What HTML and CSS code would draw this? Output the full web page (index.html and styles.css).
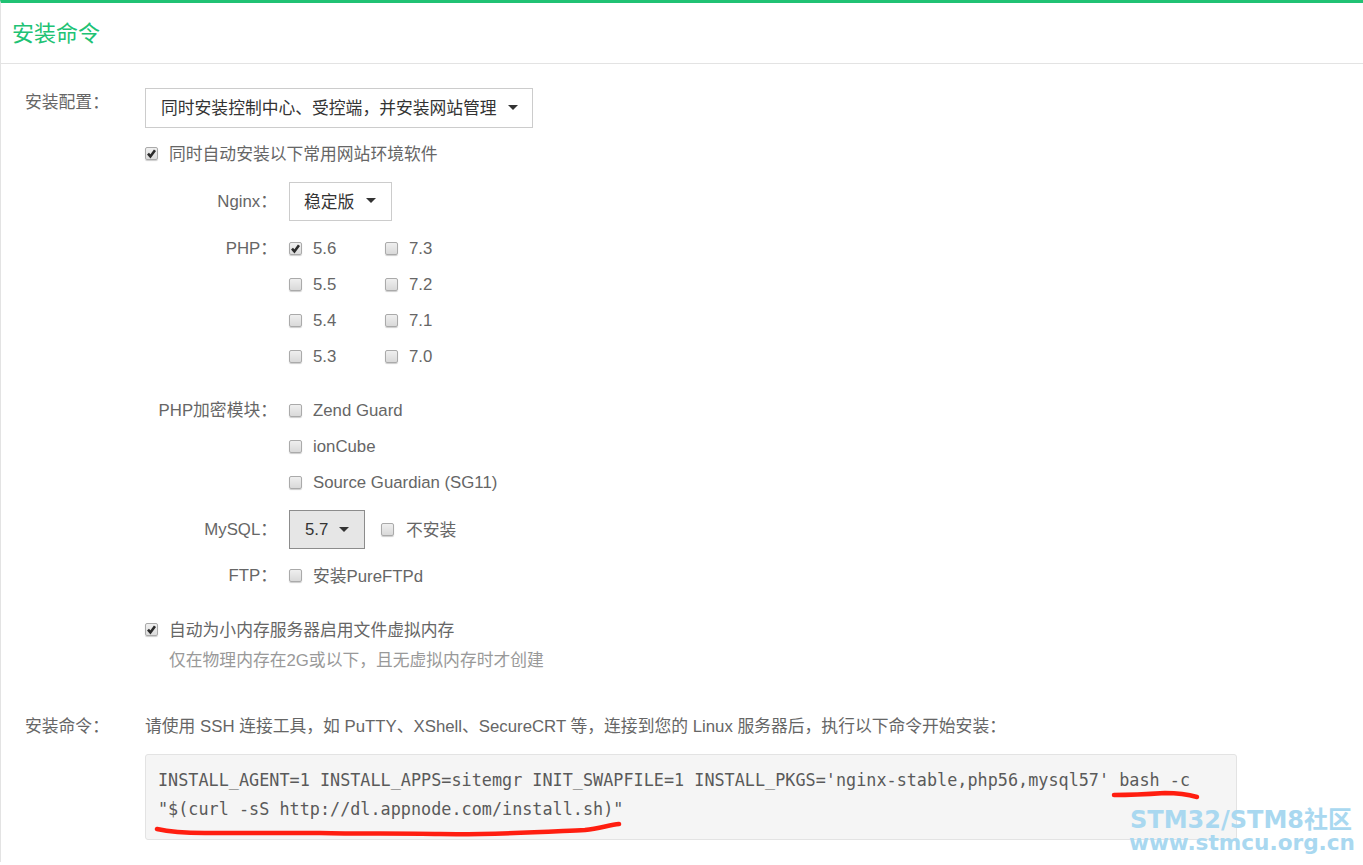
FILE: index.html
```html
<!DOCTYPE html>
<html lang="zh-CN">
<head>
<meta charset="utf-8">
<title>安装命令</title>
<link rel="stylesheet" href="styles.css">
</head>
<body>
<main class="panel">
  <h1 class="panel-title">安装命令</h1>
  <section class="form">
    <div class="row row-config">
      <div class="row-label">安装配置&#xFF1A;</div>
      <div class="row-body">
        <button class="dropdown dropdown-wide" type="button">同时安装控制中心、受控端&#xFF0C;并安装网站管理<i class="caret"></i></button>
        <label class="check check-auto"><span class="box on"><svg viewBox="0 0 12 12"><path d="M2.2 6.2 4.8 9.2 9.8 2.4" /></svg></span>同时自动安装以下常用网站环境软件</label>
        <div class="sub sub-nginx">
          <div class="sub-label">Nginx&#xFF1A;</div>
          <button class="dropdown dropdown-nginx" type="button">稳定版<i class="caret"></i></button>
        </div>
        <div class="sub sub-php">
          <div class="sub-label sub-label-check">PHP&#xFF1A;</div>
          <div class="php-grid">
            <label class="check"><span class="box on"><svg viewBox="0 0 12 12"><path d="M2.2 6.2 4.8 9.2 9.8 2.4" /></svg></span>5.6</label>
            <label class="check"><span class="box"></span>7.3</label>
            <label class="check"><span class="box"></span>5.5</label>
            <label class="check"><span class="box"></span>7.2</label>
            <label class="check"><span class="box"></span>5.4</label>
            <label class="check"><span class="box"></span>7.1</label>
            <label class="check"><span class="box"></span>5.3</label>
            <label class="check"><span class="box"></span>7.0</label>
          </div>
        </div>
        <div class="sub sub-enc">
          <div class="sub-label sub-label-check">PHP加密模块&#xFF1A;</div>
          <div class="stack">
            <label class="check"><span class="box"></span>Zend Guard</label>
            <label class="check"><span class="box"></span>ionCube</label>
            <label class="check"><span class="box"></span>Source Guardian (SG11)</label>
          </div>
        </div>
        <div class="sub sub-mysql">
          <div class="sub-label">MySQL&#xFF1A;</div>
          <button class="dropdown dropdown-mysql" type="button">5.7<i class="caret"></i></button>
          <label class="check check-none"><span class="box"></span>不安装</label>
        </div>
        <div class="sub sub-ftp">
          <div class="sub-label sub-label-check">FTP&#xFF1A;</div>
          <label class="check check-ftp"><span class="box"></span>安装PureFTPd</label>
        </div>
        <label class="check check-swap"><span class="box on"><svg viewBox="0 0 12 12"><path d="M2.2 6.2 4.8 9.2 9.8 2.4" /></svg></span>自动为小内存服务器启用文件虚拟内存</label>
        <p class="hint">仅在物理内存在2G或以下&#xFF0C;且无虚拟内存时才创建</p>
      </div>
    </div>
    <div class="row row-command">
      <div class="row-label">安装命令&#xFF1A;</div>
      <div class="row-body">
        <p class="intro">请使用 SSH 连接工具&#xFF0C;如 PuTTY、XShell、SecureCRT 等&#xFF0C;连接到您的 Linux 服务器后&#xFF0C;执行以下命令开始安装&#xFF1A;</p>
        <pre class="code">INSTALL_AGENT=1 INSTALL_APPS=sitemgr INIT_SWAPFILE=1 INSTALL_PKGS='nginx-stable,php56,mysql57' bash -c
"$(curl -sS http://dl.appnode.com/install.sh)"</pre>
      </div>
    </div>
  </section>
</main>
<svg class="scribble" viewBox="0 0 1363 865" aria-hidden="true">
  <path d="M1114 795C1130 795 1150 794 1165 793 1178 793 1190 795 1197 797" />
  <path d="M157 829C170 832 185 833 205 833 240 833 280 833 320 833 360 834 400 833 440 834 490 835 540 832 585 830 600 828 610 825 619 824" />
</svg>
<div class="watermark"><div class="wm-top">STM32/STM8社区</div><div class="wm-bottom">www.stmcu.org.cn</div></div>
</body>
</html>
```
FILE: styles.css
```css
html, body {
  margin: 0;
  padding: 0;
  height: 865px;
  overflow: hidden;
  background: #fff;
}
body {
  position: relative;
  font-family: "Liberation Sans", "Noto Sans CJK SC", sans-serif;
  font-size: 16.8px;
  color: #666;
}
.panel {
  border-top: 3px solid #20c274;
  border-left: 1px solid #e3e3e3;
  height: 862px;
  box-sizing: border-box;
}
.panel-title {
  margin: 0;
  height: 61px;
  box-sizing: border-box;
  padding: 2px 0 0 11px;
  line-height: 58px;
  font-size: 22px;
  font-weight: 400;
  color: #20c274;
  border-bottom: 1px solid #e3e3e3;
}
.row {
  display: flex;
}
.row-label {
  width: 120px;
  padding-left: 24px;
  line-height: 30px;
  flex: none;
}
.row-config {
  padding-top: 24px;
}
.row-body {
  flex: none;
}
.dropdown {
  display: flex;
  align-items: center;
  box-sizing: border-box;
  height: 40px;
  padding: 0 14px 2px;
  border: 1px solid #ccc;
  background: #fff;
  color: #333;
  font: inherit;
}
.dropdown-wide {
  width: 388px;
  padding-left: 15px;
}
.dropdown-nginx {
  width: 103px;
  height: 39px;
}
.dropdown-nginx .caret {
  margin-left: 12px;
}
.dropdown-mysql {
  width: 76px;
  height: 39px;
  padding: 0 15px;
  background: #e6e6e6;
  border-color: #8c8c8c;
}
.caret {
  display: block;
  margin-left: 11px;
  border-top: 5px solid #333;
  border-left: 5px solid transparent;
  border-right: 5px solid transparent;
}
.check {
  display: flex;
  align-items: center;
  height: 36px;
  white-space: nowrap;
}
.box {
  display: flex;
  flex: none;
  box-sizing: border-box;
  width: 13px;
  height: 13px;
  margin-right: 11px;
  margin-bottom: 2px;
  border: 1px solid #aaa;
  border-radius: 2px;
  background: linear-gradient(#efefef, #d9d9d9);
  box-shadow: 0 1px 1px rgba(0, 0, 0, .2);
}
.box.on {
  background: linear-gradient(#f0f0f0, #dcdcdc);
}
.box svg {
  display: block;
  width: 11px;
  height: 11px;
}
.box path {
  fill: none;
  stroke: #2b2b2b;
  stroke-width: 2.8;
}
.check-auto {
  margin-top: 7px;
}
.check-auto .box,
.check-swap .box,
.check-ftp .box {
  margin-bottom: 0;
}
.sub {
  display: flex;
}
.sub-label {
  width: 132px;
  margin-right: 12px;
  text-align: right;
  line-height: 39px;
  flex: none;
}
.sub-label-check {
  line-height: 36px;
}
.sub-nginx {
  margin-top: 11px;
}
.sub-php {
  margin-top: 10px;
}
.php-grid {
  display: grid;
  grid-template-columns: 96px 96px;
}
.stack {
  display: flex;
  flex-direction: column;
}
.sub-enc {
  margin-top: 18px;
}
.sub-mysql {
  margin-top: 9px;
}
.check-none {
  margin-left: 16px;
  height: 37px;
}
.check-none .box {
  margin-top: 2px;
  margin-bottom: 0;
  margin-right: 12px;
}
.sub-ftp {
  margin-top: 9px;
}
.check-ftp {
  margin-top: -1px;
}
.check-swap {
  margin-top: 17px;
}
.hint {
  margin: 0;
  padding-left: 24px;
  line-height: 28px;
  color: #999;
}
.row-command {
  margin-top: 37px;
}
.intro {
  margin: 0;
  line-height: 30px;
  white-space: nowrap;
}
.code {
  box-sizing: border-box;
  width: 1092px;
  height: 86px;
  margin: 12px 0 0;
  padding: 11px 12px;
  border: 1px solid #e3e3e3;
  border-radius: 3px;
  background: #f5f5f5;
  color: #5a5a5a;
  font-family: "DejaVu Sans Mono", monospace;
  font-size: 16.8px;
  letter-spacing: .015px;
  line-height: 29px;
  white-space: pre;
}
.scribble {
  position: absolute;
  left: 0;
  top: 0;
  width: 1363px;
  height: 865px;
  pointer-events: none;
}
.scribble path {
  fill: none;
  stroke: #ff1e10;
  stroke-width: 4.5;
  stroke-linecap: round;
}
.watermark {
  position: absolute;
  right: 8px;
  top: 808px;
  text-align: right;
  color: #a9d8f0;
  font-family: "DejaVu Sans", "Noto Sans CJK SC", sans-serif;
  font-weight: 700;
  white-space: nowrap;
}
.wm-top {
  font-size: 24px;
  line-height: 24px;
  margin-right: 3px;
}
.wm-bottom {
  font-size: 21.6px;
  line-height: 22px;
}
```
